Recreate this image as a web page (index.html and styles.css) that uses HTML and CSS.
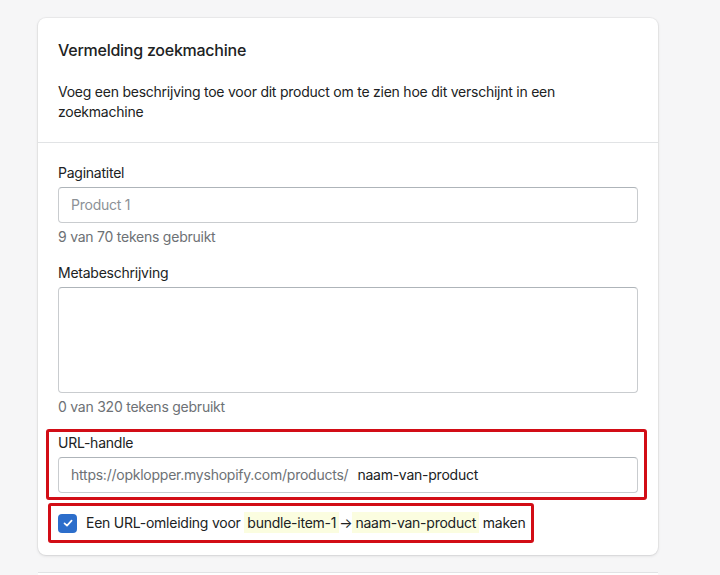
FILE: index.html
```html
<!DOCTYPE html>
<html lang="nl">
<head>
<meta charset="utf-8">
<link rel="stylesheet" href="styles.css">
</head>
<body>
<div class="page">
  <div class="card">
    <div class="section header">
      <h2 class="title">Vermelding zoekmachine</h2>
      <p class="desc">Voeg een beschrijving toe voor dit product om te zien hoe dit verschijnt in een zoekmachine</p>
    </div>
    <div class="section fields">
      <div class="field">
        <label class="label">Paginatitel</label>
        <div class="input"><span class="placeholder">Product 1</span></div>
        <div class="help">9 van 70 tekens gebruikt</div>
      </div>
      <div class="field">
        <label class="label">Metabeschrijving</label>
        <div class="input textarea"></div>
        <div class="help">0 van 320 tekens gebruikt</div>
      </div>
      <div class="field mark mark-url">
        <label class="label">URL-handle</label>
        <div class="input"><span class="prefix">https://opklopper.myshopify.com/products/</span><span class="value">naam-van-product</span></div>
      </div>
      <div class="mark mark-check">
        <span class="checkbox">
          <svg width="12" height="12" viewBox="0 0 12 12"><path d="M2.5 6.3 L5 8.6 L9.6 3.6" fill="none" stroke="#fff" stroke-width="1.7" stroke-linecap="round" stroke-linejoin="round"/></svg>
        </span>
        <span class="check-text">Een URL-omleiding voor <span class="hl">bundle-item-1</span><span class="arrow">→</span><span class="hl">naam-van-product</span> maken</span>
      </div>
    </div>
  </div>
  <div class="next-card"></div>
</div>
</body>
</html>
```
FILE: styles.css
```css
html, body {
  margin: 0;
  padding: 0;
  background: #f6f6f7;
}
body {
  font-family: Inter, "Noto Sans", sans-serif;
  color: #202223;
  font-size: 14px;
  line-height: 20px;
  letter-spacing: -0.24px;
}
.page {
  padding: 18px 0 0 38px;
  width: 620px;
}
.card {
  background: #fff;
  border-radius: 8px;
  box-shadow: 0 0 0 1px rgba(63,63,68,0.05), 0 1px 3px rgba(63,63,68,0.15);
}
.section {
  padding: 20px;
}
.header {
  border-bottom: 1px solid #e1e3e5;
}
.title {
  margin: 0;
  font-size: 16px;
  line-height: 24px;
  font-weight: 500;
  letter-spacing: -0.25px;
}
.desc {
  margin: 20px 0 0;
  padding-right: 40px;
}
.fields {
  padding-bottom: 12px;
}
.field + .field {
  margin-top: 16px;
}
.label {
  display: block;
  margin-bottom: 4px;
}
.input {
  height: 34px;
  border: 1px solid #c9cccf;
  border-top-color: #aeb4b9;
  border-radius: 4px;
  display: flex;
  align-items: center;
  padding: 0 12px;
}
.textarea {
  height: 104px;
}
.placeholder {
  color: #8c9196;
}
.prefix {
  color: #6d7175;
  margin-right: 9px;
}
.help {
  margin-top: 4px;
  color: #6d7175;
}
.mark {
  border: 3px solid #d20d16;
  border-radius: 3px;
}
.field.mark-url {
  margin: 12px -9px 0 -12px;
  padding: 1px 6px 4px 9px;
}
.mark-check {
  margin: 3px 0 0 -10px;
  width: max-content;
  padding: 7px 5px 7px 7px;
  display: flex;
  align-items: center;
}
.checkbox {
  width: 19px;
  height: 19px;
  border-radius: 4px;
  background: #2c6ecb;
  display: flex;
  align-items: center;
  justify-content: center;
  flex: none;
}
.check-text {
  margin-left: 9px;
  white-space: nowrap;
}
.hl {
  background: #fbfde0;
  padding: 2px 3px;
}
.arrow {
  padding: 0;
}
.next-card {
  margin-top: 17px;
  height: 4px;
  background: #fff;
  border-top: 1px solid #e1e3e5;
}
```
